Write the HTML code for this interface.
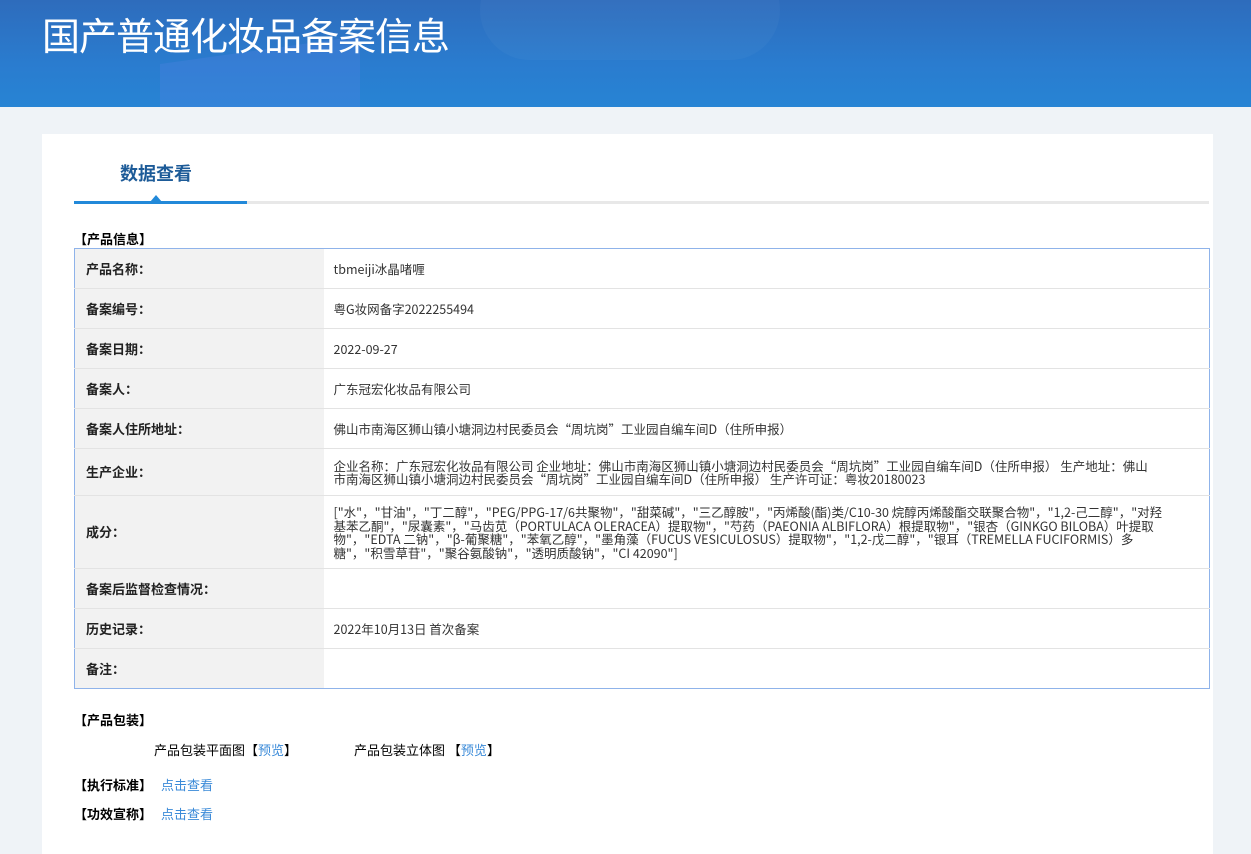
<!DOCTYPE html>
<html><head><meta charset="utf-8"><style>
*{margin:0;padding:0;box-sizing:border-box}
body{width:1251px;height:847px;overflow:hidden;background:#eff3f7;font-family:"Noto Sans CJK SC","Liberation Sans",sans-serif;font-size:13px;color:#333;position:relative}
.hd{position:absolute;left:0;top:0;width:1251px;height:107px;background:linear-gradient(180deg,#2e6cbc 0%,#2a7ccf 60%,#2784d4 100%);overflow:hidden}
.hd .s1{position:absolute;left:160px;top:50px;width:200px;height:80px;background:rgba(90,130,230,.25);transform:skewY(-8deg)}
.hd .s2{position:absolute;left:480px;top:-40px;width:300px;height:100px;border-radius:50px;background:rgba(255,255,255,.03)}
.hd h1{position:absolute;left:42px;top:6px;color:#fff;font-size:38px;font-weight:normal;font-family:"Noto Sans CJK SC",sans-serif;letter-spacing:-1px}
.card{position:absolute;left:42px;top:134px;width:1171px;height:720px;background:#fff}
.tab{position:absolute;left:120px;top:160px;font-size:18px;font-weight:bold;color:#1d5b98}
.line{position:absolute;left:74px;top:201px;width:1135px;height:3px;background:#e8e8e8}
.line b{position:absolute;left:0;top:0;width:173px;height:3px;background:#2289d9}
.tri{position:absolute;left:150px;top:195px;width:0;height:0;border-left:6px solid transparent;border-right:6px solid transparent;border-bottom:7px solid #2289d9}
.sec{position:absolute;left:74px;font-weight:bold;color:#000;font-size:13px;line-height:18px}
table{position:absolute;left:74px;top:248px;width:1136px;border-collapse:collapse;border:1px solid #8fb3ea}
td{border-bottom:1px solid #e3e3e3;padding:0 10px;font-size:12.5px;line-height:13.5px;color:#333}
td.l{width:249px;background:#f2f2f2;font-weight:bold;color:#222;padding-left:11px;font-size:13px}
a{color:#3a8ad8;text-decoration:none}
.pk{position:absolute;top:741px;font-size:13px;color:#000;line-height:18px}
</style></head><body>
<div class="hd"><div class="s1"></div><div class="s2"></div><h1>国产普通化妆品备案信息</h1></div>
<div class="card"></div>
<div class="tab">数据查看</div>
<div class="line"><b></b></div><div class="tri"></div>
<div class="sec" style="top:230px">【产品信息】</div>
<table>
<tr style="height:40px"><td class="l">产品名称：</td><td>tbmeiji冰晶啫喱</td></tr>
<tr style="height:40px"><td class="l">备案编号：</td><td>粤G妆网备字2022255494</td></tr>
<tr style="height:40px"><td class="l">备案日期：</td><td>2022-09-27</td></tr>
<tr style="height:40px"><td class="l">备案人：</td><td>广东冠宏化妆品有限公司</td></tr>
<tr style="height:40px"><td class="l">备案人住所地址：</td><td>佛山市南海区狮山镇小塘洞边村民委员会“周坑岗”工业园自编车间D（住所申报）</td></tr>
<tr style="height:47px"><td class="l">生产企业：</td><td style="padding-right:50px">企业名称：广东冠宏化妆品有限公司 企业地址：佛山市南海区狮山镇小塘洞边村民委员会“周坑岗”工业园自编车间D（住所申报） 生产地址：佛山市南海区狮山镇小塘洞边村民委员会“周坑岗”工业园自编车间D（住所申报） 生产许可证：粤妆20180023</td></tr>
<tr style="height:73px"><td class="l">成分：</td><td style="padding-right:40px">["水"，"甘油"，"丁二醇"，"PEG/PPG-17/6共聚物"，"甜菜碱"，"三乙醇胺"，"丙烯酸(酯)类/C10-30 烷醇丙烯酸酯交联聚合物"，"1,2-己二醇"，"对羟基苯乙酮"，"尿囊素"，"马齿苋（PORTULACA OLERACEA）提取物"，"芍药（PAEONIA ALBIFLORA）根提取物"，"银杏（GINKGO BILOBA）叶提取物"，"EDTA 二钠"，"β-葡聚糖"，"苯氧乙醇"，"墨角藻（FUCUS VESICULOSUS）提取物"，"1,2-戊二醇"，"银耳（TREMELLA FUCIFORMIS）多糖"，"积雪草苷"，"聚谷氨酸钠"，"透明质酸钠"，"CI 42090"]</td></tr>
<tr style="height:40px"><td class="l">备案后监督检查情况：</td><td></td></tr>
<tr style="height:40px"><td class="l">历史记录：</td><td>2022年10月13日 首次备案</td></tr>
<tr style="height:40px"><td class="l" style="border-bottom:none">备注：</td><td style="border-bottom:none"></td></tr>
</table>
<div class="sec" style="top:711px">【产品包装】</div>
<div class="pk" style="left:154px">产品包装平面图【<a>预览</a>】</div>
<div class="pk" style="left:354px">产品包装立体图 【<a>预览</a>】</div>
<div class="sec" style="top:776px">【执行标准】 <a style="font-weight:normal;margin-left:6px">点击查看</a></div>
<div class="sec" style="top:805px">【功效宣称】 <a style="font-weight:normal;margin-left:6px">点击查看</a></div>
</body></html>
